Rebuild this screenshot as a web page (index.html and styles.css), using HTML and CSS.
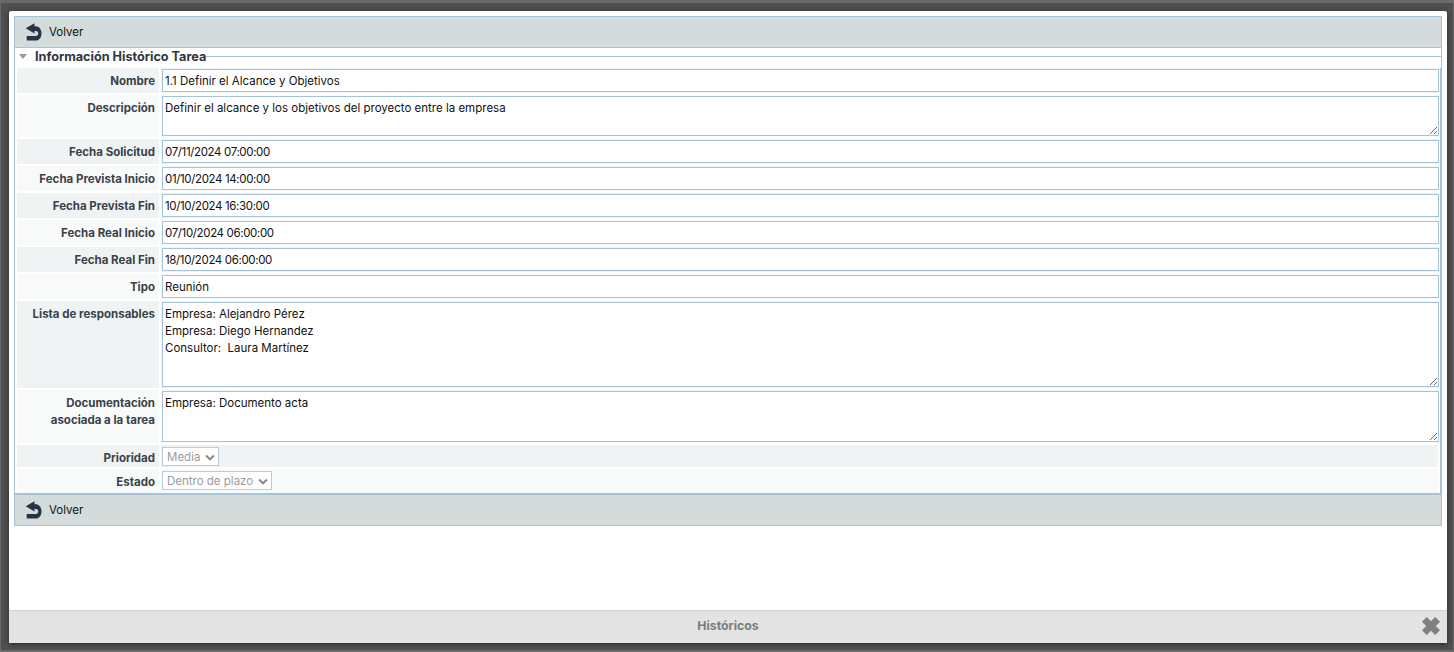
FILE: index.html
```html
<!DOCTYPE html>
<html lang="es">
<head>
<meta charset="utf-8">
<title>Históricos</title>
<link rel="stylesheet" href="styles.css">
</head>
<body>
<div class="dialog">
  <div class="content">
    <div class="panel">
      <div class="toolbar">
        <svg class="back" viewBox="0 0 17 18"><path d="M9.500 .2 L.7 5.300 L9.500 10.500 V7.900 H10.800 C12.500 7.900 13.300 9 13.300 10.300 C13.300 11.600 12.500 12.900 10.800 12.900 H1.700 V17.500 H10.800 C14.200 17.500 16.500 14.200 16.500 10.400 C16.500 6.500 14.200 3.300 10.800 3.300 H9.500 Z"/></svg>
        <span class="tool-text">Volver</span>
      </div>
      <div class="legend">
        <span class="arrow"></span>
        <span class="legend-text">Información Histórico Tarea</span>
        <span class="legend-line"></span>
      </div>
      <div class="form">
        <div class="row odd h25"><label>Nombre</label><div class="value"><div class="field">1.1 Definir el Alcance y Objetivos</div></div></div>
        <div class="row even h42"><label>Descripción</label><div class="value"><div class="field area">Definir el alcance y los objetivos del proyecto entre la empresa</div></div></div>
        <div class="row odd h25"><label>Fecha Solicitud</label><div class="value"><div class="field date">07/11/2024 07:00:00</div></div></div>
        <div class="row even h25"><label>Fecha Prevista Inicio</label><div class="value"><div class="field date">01/10/2024 14:00:00</div></div></div>
        <div class="row odd h25"><label>Fecha Prevista Fin</label><div class="value"><div class="field date">10/10/2024 16:30:00</div></div></div>
        <div class="row even h25"><label>Fecha Real Inicio</label><div class="value"><div class="field date">07/10/2024 06:00:00</div></div></div>
        <div class="row odd h25"><label>Fecha Real Fin</label><div class="value"><div class="field date">18/10/2024 06:00:00</div></div></div>
        <div class="row even h25"><label>Tipo</label><div class="value"><div class="field">Reunión</div></div></div>
        <div class="row odd h87"><label>Lista de responsables</label><div class="value"><div class="field area">Empresa: Alejandro Pérez<br>Empresa: Diego Hernandez<br>Consultor:&nbsp; Laura Martínez</div></div></div>
        <div class="row even h53"><label>Documentación<br>asociada a la tarea</label><div class="value"><div class="field area">Empresa: Documento acta</div></div></div>
        <div class="row odd h22"><label>Prioridad</label><div class="value"><div class="select">Media<svg class="chev" viewBox="0 0 10 7"><path d="M1 1.500 L5 5.300 L9 1.500"/></svg></div></div></div>
        <div class="row even h24"><label>Estado</label><div class="value"><div class="select">Dentro de plazo<svg class="chev" viewBox="0 0 10 7"><path d="M1 1.500 L5 5.300 L9 1.500"/></svg></div></div></div>
      </div>
      <div class="toolbar bottom">
        <svg class="back" viewBox="0 0 17 18"><path d="M9.500 .2 L.7 5.300 L9.500 10.500 V7.900 H10.800 C12.500 7.900 13.300 9 13.300 10.300 C13.300 11.600 12.500 12.900 10.800 12.900 H1.700 V17.500 H10.800 C14.200 17.500 16.500 14.200 16.500 10.400 C16.500 6.500 14.200 3.300 10.800 3.300 H9.500 Z"/></svg>
        <span class="tool-text">Volver</span>
      </div>
    </div>
  </div>
  <div class="footer">
    <span class="footer-title">Históricos</span>
    <svg class="close" viewBox="0 0 18 18"><path d="M0 4.800 L4.800 0 L9 4.200 L13.200 0 L18 4.800 L13.800 9 L18 13.200 L13.200 18 L9 13.800 L4.800 18 L0 13.200 L4.200 9 Z"/></svg>
  </div>
</div>
</body>
</html>
```
FILE: styles.css
```css
* { box-sizing: border-box; }
html, body { margin: 0; height: 100%; }
body {
  width: 1454px;
  height: 652px;
  overflow: hidden;
  background: #505050;
  border-top: 3px solid #6a6a6a;
  padding: 8px 7px 9px 9px;
  box-shadow: inset 1px 0 0 #6a6a6a, inset -1px 0 0 #6a6a6a, inset 0 -2px 0 #6a6a6a;
  font-family: Inter, "Open Sans", sans-serif;
  color: #111;
}
.dialog {
  height: 100%;
  background: #fff;
  display: flex;
  flex-direction: column;
  border-radius: 2px;
  box-shadow: 0 1px 5px rgba(0,0,0,.5);
}
.content { flex: 1; padding: 5px 5px 0 5px; }
.panel { border: 1px solid #a6c3dc; }
.toolbar {
  height: 31px;
  background: #d3dbdb;
  border-bottom: 1px solid #a6c3dc;
  display: flex;
  align-items: center;
  padding-left: 10px;
  gap: 7px;
  font-size: 11.500px;
}
.tool-text { padding-bottom: 1px; }
.toolbar.bottom { border-bottom: 0; border-top: 2px solid #a6c3dc; height: 32px; }
.back { width: 17px; height: 18px; fill: #263545; }
.legend {
  height: 20px;
  display: flex;
  align-items: center;
  padding-left: 4px;
  padding-bottom: 3px;
}
.arrow {
  width: 0; height: 0;
  border-left: 4px solid transparent;
  border-right: 4px solid transparent;
  border-top: 5px solid #9a9a9a;
  margin-right: 8px;
}
.legend-text { font-size: 12.650px; font-weight: 700; color: #2f3640; padding-right: 0; }
.legend-line { flex: 1; border-top: 1px solid #a6c3dc; }
.form {
  display: flex;
  flex-direction: column;
  gap: 2px;
  padding: 0 2px 0 2px;
  border-right: 1px solid #a6c3dc;
}
.row {
  display: grid;
  grid-template-columns: 142px 1fr;
  column-gap: 2px;
}
.odd label, .odd .value { background: #f0f3f4; }
.even label, .even .value { background: #f8fafa; }
.h25 { height: 25px; }
.h42 { height: 42px; }
.h87 { height: 87px; }
.h53 { height: 53px; }
.h22 { height: 22px; }
.h24 { height: 24px; }
label {
  font-size: 11.500px;
  font-weight: 700;
  color: #3a4149;
  text-align: right;
  line-height: 17px;
  padding: 5px 4px 0 0;
}
.value { display: flex; flex-direction: column; align-items: flex-start; min-width: 0; }
.field {
  align-self: stretch;
  margin: 1px -1px 0 1px;
  height: 23px;
  border: 1px solid #a6c3dc;
  background: #fff;
  font-size: 11.500px;
  line-height: 17px;
  padding: 3px 2px 1px;
}
.date { letter-spacing: -.36px; }
.area { flex: 1; margin-bottom: 1px; overflow: hidden; resize: vertical; }
.select {
  height: 19px;
  margin: 2px 0 0 1px;
  border: 1px solid #b5cce2;
  background: #fff;
  color: #9b9b9b;
  font-size: 11.500px;
  line-height: 17px;
  padding: 1px 3px 0 4px;
  display: flex;
  align-items: center;
  gap: 5px;
}
.chev { width: 10px; height: 7px; fill: none; stroke: #8a8a8a; stroke-width: 2; }
.footer {
  height: 33px;
  background: #e3e3e3;
  border-top: 1px solid #d2d2d2;
  padding-bottom: 3px;
  display: flex;
  align-items: center;
  justify-content: center;
  position: relative;
}
.footer-title { font-size: 12.300px; font-weight: 700; color: #7d7d7d; }
.close { position: absolute; right: 7px; top: 6px; width: 18px; height: 18px; fill: #808080; }
```
